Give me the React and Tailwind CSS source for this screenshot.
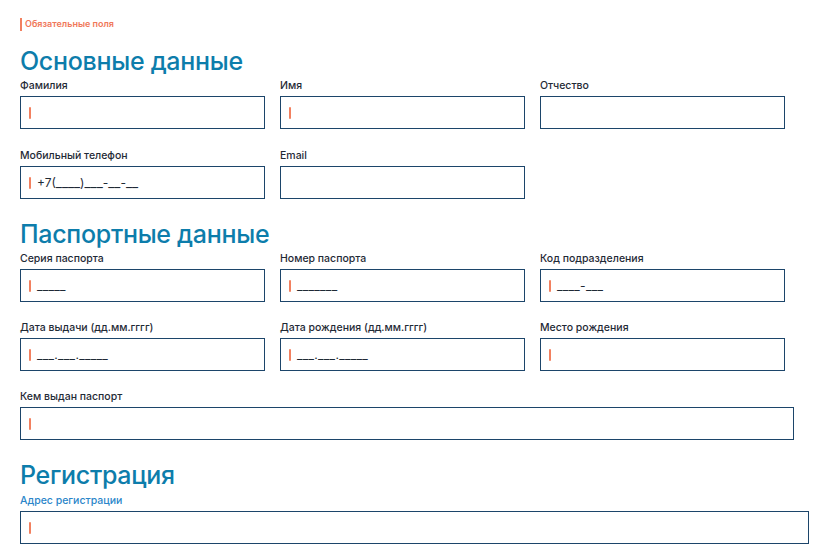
import React from "react";

const font = { fontFamily: "Inter, 'Noto Sans', sans-serif" };

function Caret() {
  return <span className="inline-block w-[2px] h-[12px] bg-[#f2805f] rounded-[1px] shrink-0" />;
}

function U({ children }) {
  return <span className="text-[13.3px] leading-[12px]">{children}</span>;
}

function Field({ label, mask, caret = true, width = "w-[245px]", labelColor = "text-[#1f2a36]" }) {
  return (
    <div className={`flex flex-col gap-[3px] ${width}`}>
      <div className={`h-[14px] leading-[14px] text-[10.5px] font-medium ${labelColor}`}>{label}</div>
      <div className="h-[33px] border border-[#1c456a] bg-white flex items-center pl-[8px] gap-[6px]">
        {caret && <Caret />}
        {mask && <span className="text-[12px] leading-[14px] text-[#1f2a36] tracking-[0.3px]">{mask}</span>}
      </div>
    </div>
  );
}

function Heading({ children, className = "" }) {
  return (
    <div className={`h-[30px] leading-[30px] text-[25px] font-medium text-[#0d7dab] tracking-[-0.3px] ${className}`}>
      {children}
    </div>
  );
}

export default function App() {
  const phone = (
    <span className="tracking-normal">
      +7(<U>____</U>)<U>___</U>-<U>__</U>-<U>__</U>
    </span>
  );
  return (
    <div className="w-[825px] h-[559px] bg-white overflow-hidden pt-[18px] pl-[20px]" style={font}>
      <div className="flex items-center gap-[3px] h-[12px]">
        <span className="w-[2px] h-[13px] bg-[#f2805f]" />
        <span className="text-[9px] text-[#f0785a] font-semibold">Обязательные поля</span>
      </div>

      <Heading className="mt-[16px]">Основные данные</Heading>
      <div className="mt-[3px] flex gap-[15px]">
        <Field label="Фамилия" />
        <Field label="Имя" />
        <Field label="Отчество" caret={false} />
      </div>
      <div className="mt-[20px] flex gap-[15px]">
        <Field label="Мобильный телефон" mask={phone} />
        <Field label="Email" caret={false} />
      </div>

      <Heading className="mt-[20px]">Паспортные данные</Heading>
      <div className="mt-[3px] flex gap-[15px]">
        <Field label="Серия паспорта" mask="_____" />
        <Field label="Номер паспорта" mask="_______" />
        <Field label="Код подразделения" mask="____-___" />
      </div>
      <div className="mt-[19px] flex gap-[15px]">
        <Field label="Дата выдачи (дд.мм.гггг)" mask="___.___._____" />
        <Field label="Дата рождения (дд.мм.гггг)" mask="___.___._____" />
        <Field label="Место рождения" />
      </div>
      <div className="mt-[19px]">
        <Field label="Кем выдан паспорт" width="w-[774px]" />
      </div>

      <Heading className="mt-[20px]">Регистрация</Heading>
      <div className="mt-[4px]">
        <Field label="Адрес регистрации" width="w-[789px]" labelColor="text-[#2b86c9]" />
      </div>
    </div>
  );
}
